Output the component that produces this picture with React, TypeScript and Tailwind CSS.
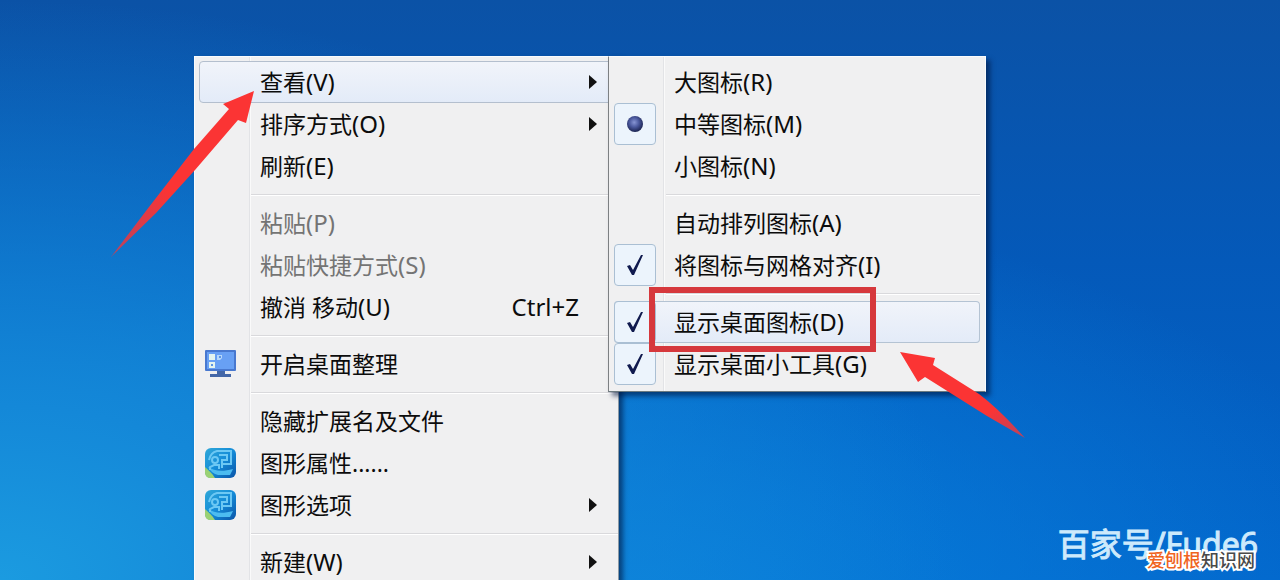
import { useState } from "react";
import type { ReactNode } from "react";

const box =
  "col-start-1 row-start-1 size-[42px] appearance-none rounded-[4px] border border-[#aabfd3] bg-[#ecf4fc]";

function MonitorIcon() {
  return (
    <svg width="32" height="28" viewBox="0 0 32 28">
      <path d="M12 20h8v4h6v3H5v-3h7z" fill="#4467a8" />
      <rect x="0" y="0" width="31" height="21" rx="1" fill="#4878cf" />
      <rect x="2" y="2" width="27" height="17" fill="#68a0f4" />
      <path d="M4 4h6v6H4zM4 12h6v6H4z" fill="#e4f4ef" />
      <path d="M12 5h5v3l-2 2h-3z" fill="#b7d8fa" />
      <path d="M14 6h2v2h-2zM6 14h2v2H6z" fill="#5c94e4" />
    </svg>
  );
}

function GraphicsIcon() {
  return (
    <svg width="31" height="30" viewBox="0 0 31 30">
      <defs>
        <linearGradient id="gfx" x1="0" y1="0" x2="1" y2="1">
          <stop offset="0" stopColor="#31a8d8" />
          <stop offset="0.5" stopColor="#148cd8" />
          <stop offset="1" stopColor="#0b55a8" />
        </linearGradient>
      </defs>
      <rect width="31" height="30" rx="6" fill="url(#gfx)" />
      <path d="M0 19c3 3 7 6 10 11H6c-4 0-6-2-6-6z" fill="#9bd174" />
      <path d="M3 19c6 4 14 5 25 2l-3 6H13C9 26 5 23 3 19z" fill="#4cbcf0" />
      <g fill="none" stroke="#6cc8f4" strokeWidth="2">
        <path d="M4 12c1-5 4-8 8-9h14v13h-8" />
        <path d="M14 7h8v5h-5v8" />
        <circle cx="10" cy="12" r="3" />
        <path d="M5 22v-3l4-2h5v4" />
      </g>
    </svg>
  );
}

function Check() {
  return (
    <svg width="18" height="22" viewBox="0 0 18 22" className="pointer-events-none col-start-1 row-start-1">
      <path d="M1 12l3-1 3 5L15 1h2L8 21H6z" fill="#101a4e" />
    </svg>
  );
}

function Dot() {
  return (
    <svg width="16" height="16" viewBox="0 0 16 16" className="pointer-events-none col-start-1 row-start-1">
      <defs>
        <radialGradient id="dot" cx="0.45" cy="0.4" r="0.6">
          <stop offset="0" stopColor="#8795d4" />
          <stop offset="0.5" stopColor="#4a589d" />
          <stop offset="1" stopColor="#1b2350" />
        </radialGradient>
      </defs>
      <circle cx="8" cy="8" r="8" fill="url(#dot)" />
    </svg>
  );
}

function Label({ text, hotkey }: { text: string; hotkey?: string }) {
  return (
    <span className="whitespace-pre">
      {text}
      {hotkey && <span className="text-[24px]">({hotkey})</span>}
    </span>
  );
}

type ItemProps = {
  text: string;
  hotkey?: string;
  shortcut?: string;
  icon?: ReactNode;
  arrow?: boolean;
  active?: boolean;
  disabled?: boolean;
};

function Item({ text, hotkey, shortcut, icon, arrow, active, disabled }: ItemProps) {
  return (
    <button
      type="button"
      disabled={disabled}
      className={`flex h-[42px] w-full items-center rounded-[4px] border pr-5 text-left disabled:text-[#747474] ${
        active ? "border-[#b4bfce] bg-linear-to-b from-[#f1f4fa] to-[#e3ebf8]" : "border-transparent"
      }`}
    >
      <span className="flex w-[60px] shrink-0 pl-[5px]">{icon}</span>
      <Label text={text} hotkey={hotkey} />
      {shortcut && <span className="ml-auto pr-[18px] text-[24px]">{shortcut}</span>}
      {arrow && (
        <svg width="8" height="14" viewBox="0 0 8 14" className="ml-auto">
          <path d="M0 0l8 7-8 7z" fill="#111" />
        </svg>
      )}
    </button>
  );
}

type OptionProps = {
  type: "checkbox" | "radio";
  text: string;
  hotkey: string;
  checked: boolean;
  active?: boolean;
  onChange: () => void;
};

function Option({ type, text, hotkey, checked, active, onChange }: OptionProps) {
  return (
    <label
      className={`flex h-[42px] items-center rounded-[4px] ${
        active ? "bg-linear-to-b from-[#f1f4fa] to-[#e3ebf8] ring-1 ring-[#b4c3d3] ring-inset" : ""
      }`}
    >
      <span className="grid w-[60px] shrink-0 grid-cols-[42px] place-items-center">
        <input
          type={type}
          name={type === "radio" ? "icon-size" : undefined}
          checked={checked}
          onChange={onChange}
          className={checked ? box : "col-start-1 row-start-1 size-[42px] appearance-none"}
        />
        {checked && (type === "radio" ? <Dot /> : <Check />)}
      </span>
      <Label text={text} hotkey={hotkey} />
    </label>
  );
}

function Separator() {
  return (
    <div className="flex h-[15px] items-center pl-[52px]">
      <hr className="h-[2px] flex-1 border-0 border-t border-b border-t-[#d9d9dc] border-b-white" />
    </div>
  );
}

const gutter = "bg-[linear-gradient(90deg,transparent_54px,#e2e3e6_54px,#e2e3e6_55px,#fafafa_55px,#fafafa_56px,transparent_56px)]";

export default function App() {
  const [size, setSize] = useState("M");
  const [on, setOn] = useState<Record<string, boolean>>({ A: false, I: true, D: true, G: true });
  const toggle = (key: string) => setOn(prev => ({ ...prev, [key]: !prev[key] }));

  return (
    <main className="relative h-screen overflow-hidden bg-[radial-gradient(ellipse_75%_100%_at_0%_100%,#1b9be0_0%,#1488d8_30%,transparent_100%),radial-gradient(ellipse_60%_70%_at_50%_105%,#0880dc_0%,transparent_100%),linear-gradient(180deg,#0b52a6_0%,#0459b9_45%,#0265cb_100%)] font-['Noto_Sans','Noto_Sans_CJK_SC',sans-serif] text-[23px] leading-[32px] text-[#0c0c0c]">
      <div className="flex items-start pt-14 pl-[194px]">
        {/* MAIN MENU */}
        <nav className={`w-[425px] shrink-0 border border-[#f8fbfd] border-r-[#8d9aa5] bg-[#f0f0f1] p-1 pr-0 shadow-[4px_4px_5px_rgba(0,20,60,0.6)] ${gutter}`}>
          <Item text="查看" hotkey="V" arrow active />
          <Item text="排序方式" hotkey="O" arrow />
          <Item text="刷新" hotkey="E" />
          <Separator />
          <Item text="粘贴" hotkey="P" disabled />
          <Item text="粘贴快捷方式" hotkey="S" disabled />
          <Item text="撤消 移动" hotkey="U" shortcut="Ctrl+Z" />
          <Separator />
          <Item text="开启桌面整理" icon={<MonitorIcon />} />
          <Separator />
          <Item text="隐藏扩展名及文件" />
          <Item text="图形属性......" icon={<GraphicsIcon />} />
          <Item text="图形选项" icon={<GraphicsIcon />} arrow />
          <Separator />
          <Item text="新建" hotkey="W" arrow />
        </nav>

        {/* VIEW SUBMENU */}
        <nav className={`z-10 -ml-[11px] w-[378px] shrink-0 border border-[#f8fbfd] border-b-[#6c7a80] border-l-[#7d8083] bg-[#f0f0f1] px-[5px] pt-1 pb-[6px] shadow-[4px_4px_5px_rgba(0,20,60,0.6)] ${gutter}`}>
          <Option type="radio" text="大图标" hotkey="R" checked={size === "R"} onChange={() => setSize("R")} />
          <Option type="radio" text="中等图标" hotkey="M" checked={size === "M"} onChange={() => setSize("M")} />
          <Option type="radio" text="小图标" hotkey="N" checked={size === "N"} onChange={() => setSize("N")} />
          <Separator />
          <Option type="checkbox" text="自动排列图标" hotkey="A" checked={on.A} onChange={() => toggle("A")} />
          <Option type="checkbox" text="将图标与网格对齐" hotkey="I" checked={on.I} onChange={() => toggle("I")} />
          <Separator />
          <Option type="checkbox" text="显示桌面图标" hotkey="D" checked={on.D} active onChange={() => toggle("D")} />
          <Option type="checkbox" text="显示桌面小工具" hotkey="G" checked={on.G} onChange={() => toggle("G")} />
        </nav>
      </div>

      {/* ANNOTATIONS */}
      <div className="pointer-events-none absolute top-[287px] left-[649px] z-20 h-[65px] w-[227px] border-6 border-[#d6383c]" />
      <svg width="144" height="168" viewBox="0 0 144 168" className="pointer-events-none absolute top-[90px] left-[111px] z-20">
        <defs>
          <linearGradient id="tail1" x1="1" y1="0" x2="0" y2="1">
            <stop offset="0.6" stopColor="#fb3434" />
            <stop offset="1" stopColor="#b8435f" />
          </linearGradient>
        </defs>
        <path d="M143 1l-31 13 6 5L83 59 38 117 0 167l45-44 39-43 43-50 8 3z" fill="url(#tail1)" />
      </svg>
      <svg width="126" height="88" viewBox="0 0 126 88" className="pointer-events-none absolute top-[351px] left-[900px] z-20">
        <defs>
          <linearGradient id="tail2" x1="0" y1="0" x2="1" y2="1">
            <stop offset="0.7" stopColor="#fb3434" />
            <stop offset="1" stopColor="#b8435f" />
          </linearGradient>
        </defs>
        <path d="M0 1l35 6-2 7 46 29Q99 58 125 87L87 65 25 26l-7 5z" fill="url(#tail2)" />
      </svg>

      {/* WATERMARK */}
      <div className="absolute right-[22px] bottom-4 text-[32px] leading-10 text-[#cdeafc] [-webkit-text-stroke:1px_#cdeafc]">百家号/Fude6</div>
      <div className="absolute right-[25px] bottom-2 text-[18px] leading-6 font-medium text-[#4a4a4a] [paint-order:stroke_fill] [-webkit-text-stroke:4px_white]">
        <span className="text-[#f0641e]">爱刨根</span>知识网
      </div>
    </main>
  );
}
